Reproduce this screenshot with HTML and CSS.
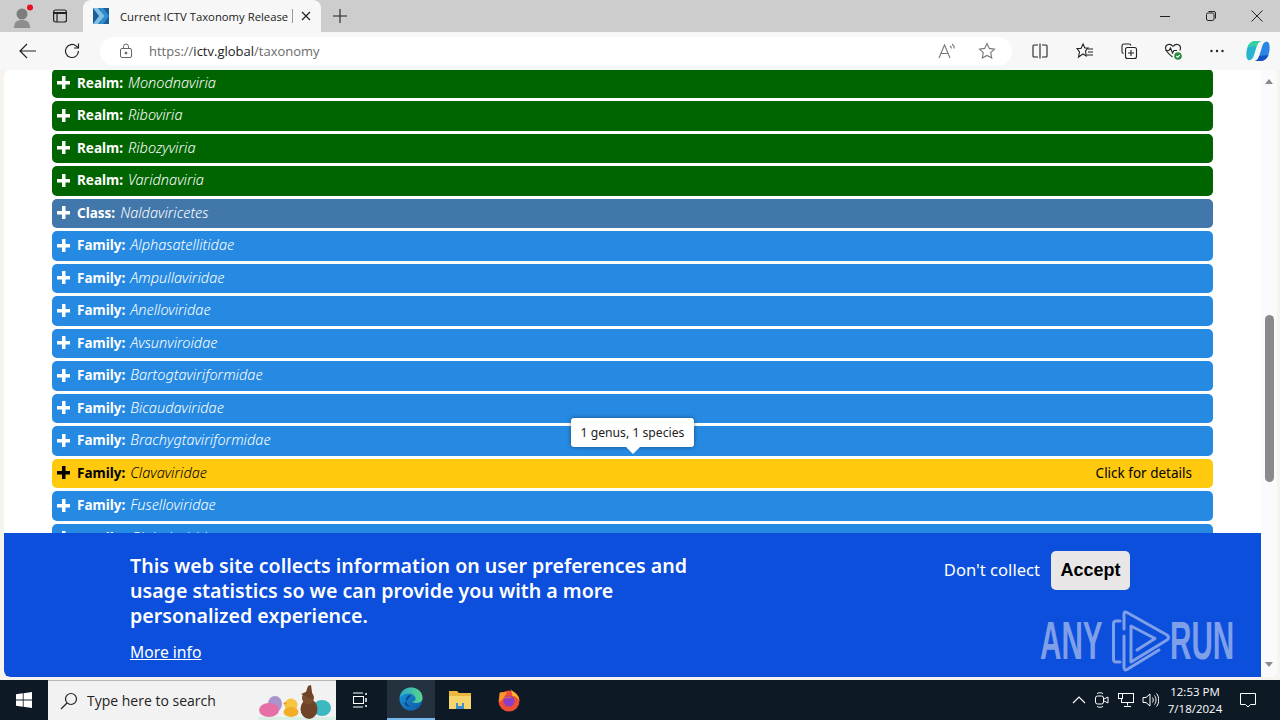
FILE: index.html
```html
<!DOCTYPE html>
<html lang="en">
<head>
    <meta charset="UTF-8">
    <title>Current ICTV Taxonomy Release</title>
    <link rel="stylesheet" href="styles.css">
</head>
<body>
    <div class="tabstrip">
        <div class="profile">
            <svg width="24" height="24" viewBox="0 0 24 24"><circle cx="11" cy="10" r="5.5" fill="#7d7d7d"/><path d="M3 24c0-6 3-8 8-8s8 2 8 8z" fill="#8e8e8e"/><circle cx="19" cy="3.5" r="3" fill="#e81123"/></svg>
        </div>
        <div class="tab-actions">
            <svg width="16" height="16" viewBox="0 0 16 16" fill="none" stroke="#222" stroke-width="1.2"><rect x="1.600" y="2" width="12.800" height="12" rx="2"/><path d="M1.600 5h12.800" stroke-width="2"/><path d="M5 5v9"/></svg>
        </div>
        <div class="tab">
            <svg class="favicon" width="16" height="16" viewBox="0 0 16 16"><rect width="16" height="16" fill="#1c5f96"/><path d="M0 0h5l7 8-7 8H0l6-8z" fill="#7fc0e8"/><path d="M6 0h4l6 8-6 8H6l6-8z" fill="#2f8fd0"/></svg>
            <span class="tab-title">Current ICTV Taxonomy Release</span>
            <span class="tab-sep"></span>
            <svg class="tab-close" width="10" height="10" viewBox="0 0 10 10" stroke="#222" stroke-width="1.2"><path d="M1 1l8 8M9 1l-8 8"/></svg>
        </div>
        <svg class="new-tab" width="14" height="14" viewBox="0 0 14 14" stroke="#222" stroke-width="1.1"><path d="M7 0v14M0 7h14"/></svg>
        <div class="window-buttons">
            <svg width="12" height="12" viewBox="0 0 12 12" stroke="#222"><path d="M1 6.500h10"/></svg>
            <svg width="12" height="12" viewBox="0 0 12 12" fill="none" stroke="#222"><rect x="1.500" y="3" width="7.500" height="7.500" rx="1.500"/><path d="M3.500 1.500h5.500a1.500 1.500 0 0 1 1.500 1.500v5.500"/></svg>
            <svg width="12" height="12" viewBox="0 0 12 12" stroke="#222"><path d="M.5.5l11 11M11.500.5l-11 11"/></svg>
        </div>
    </div>

    <div class="toolbar">
        <svg class="nav-icon" width="18" height="16" viewBox="0 0 18 16" fill="none" stroke="#222" stroke-width="1.2"><path d="M1 8h16M8 1L1 8l7 7"/></svg>
        <svg class="nav-icon" width="18" height="18" viewBox="0 0 18 18" fill="none" stroke="#222" stroke-width="1.2"><path d="M15.500 9a6.500 6.500 0 1 1-2.200-4.900L15.500 6"/><path d="M15.500 1.500V6H11"/></svg>
        <div class="address">
            <svg class="lock" width="14" height="16" viewBox="0 0 14 16" fill="none" stroke="#666" stroke-width="1"><rect x="1.500" y="5.500" width="11" height="9" rx="1.500"/><path d="M4.500 5.500V3.500a2.500 2.500 0 0 1 5 0v2"/><circle cx="7" cy="10" r="1" fill="#666"/></svg>
            <span class="url">https://<b>ictv.global</b>/taxonomy</span>
            <svg class="addr-icon" width="18" height="18" viewBox="0 0 18 18" fill="none" stroke="#777" stroke-width="1.1"><path d="M1 16L6.500 3 12 16M3 11.500h7"/><path d="M12 4c1 .7 1.400 1.500 1.400 2.500M14 2c1.600 1.200 2.300 2.800 2.300 4.500"/></svg>
            <svg class="addr-icon" width="18" height="18" viewBox="0 0 18 18" fill="none" stroke="#777" stroke-width="1.1"><path d="M9 1.500l2.300 4.900 5.200.7-3.800 3.600 1 5.300L9 13.400 4.300 16l1-5.300L1.500 7.100l5.200-.7z"/></svg>
        </div>
        <div class="tools">
            <svg width="16" height="16" viewBox="0 0 16 16" fill="none" stroke="#222" stroke-width="1.1"><path d="M6 2H2a1 1 0 0 0-1 1v10a1 1 0 0 0 1 1h4M10 2h4a1 1 0 0 1 1 1v10a1 1 0 0 1-1 1h-4M8 .5v15"/></svg>
            <svg width="18" height="18" viewBox="0 0 18 18" fill="none" stroke="#222" stroke-width="1.1"><path d="M7 2l1.800 4H12L9.500 9l.8 5L7 12l-4.500 3 1-5L1 6.500h4z"/><path d="M12 7h5M12 10h5M11 13h6"/></svg>
            <svg width="18" height="18" viewBox="0 0 18 18" fill="none" stroke="#222" stroke-width="1.1"><rect x="5.500" y="5.500" width="11" height="11" rx="2"/><path d="M11 8v6M8 11h6"/><path d="M3.500 11.500A2 2 0 0 1 2 9.500V4a2 2 0 0 1 2-2h5a2 2 0 0 1 2 1.500"/></svg>
            <svg width="18" height="18" viewBox="0 0 18 18" fill="none" stroke="#222" stroke-width="1.1"><path d="M9 4.500C6.500 1 1.500 2 1.500 6c0 3.500 4 6.500 7 9"/><path d="M9 4.500c2.500-3.500 7.500-2.500 7.500 1.500 0 1-.3 1.800-.8 2.500"/><path d="M1.500 8.500h3.500l1.500-2.500 2 5 1.500-2.500h3"/><circle cx="14" cy="14" r="3.800" fill="#2c8a3f" stroke="none"/><path d="M12.300 14l1.300 1.300 2.200-2.500" stroke="#fff"/></svg>
            <svg width="16" height="16" viewBox="0 0 16 16" fill="#222"><circle cx="2.500" cy="8" r="1.200"/><circle cx="8" cy="8" r="1.200"/><circle cx="13.500" cy="8" r="1.200"/></svg>
            <svg class="copilot" width="24" height="24" viewBox="0 0 24 24">
                <path d="M9 2h6c-2.500 .5-3.500 3-4.500 6l-2.500 8c-.8 3-2.500 6-6 5C0 19 0 14 1 10 2 6 5 2 9 2z" fill="#27b5cf"/>
                <path d="M1.500 8C3 4.500 5.500 2 9 2h6c-2.500 .5-3.500 3-4 5z" fill="#35cfa0"/>
                <path d="M15 22H9c2.500-.5 3.500-3 4.500-6l2.500-8c.8-3 2.500-6 6-5 2 2 2 7 1 11-1 4-4 8-8 8z" fill="#2a86e4"/>
                <path d="M22.500 16c-1.500 3.500-4 6-7.500 6H9c2.500-.5 3.500-3 4-5z" fill="#1553c4"/>
            </svg>
        </div>
    </div>

    <div class="viewport">
        <div class="page">
            <div class="content">
                <div class="taxa">
                    <div class="row realm"><span class="plus"></span><b>Realm:</b> <i>Monodnaviria</i></div>
                    <div class="row realm"><span class="plus"></span><b>Realm:</b> <i>Riboviria</i></div>
                    <div class="row realm"><span class="plus"></span><b>Realm:</b> <i>Ribozyviria</i></div>
                    <div class="row realm"><span class="plus"></span><b>Realm:</b> <i>Varidnaviria</i></div>
                    <div class="row class"><span class="plus"></span><b>Class:</b> <i>Naldaviricetes</i></div>
                    <div class="row family"><span class="plus"></span><b>Family:</b> <i>Alphasatellitidae</i></div>
                    <div class="row family"><span class="plus"></span><b>Family:</b> <i>Ampullaviridae</i></div>
                    <div class="row family"><span class="plus"></span><b>Family:</b> <i>Anelloviridae</i></div>
                    <div class="row family"><span class="plus"></span><b>Family:</b> <i>Avsunviroidae</i></div>
                    <div class="row family"><span class="plus"></span><b>Family:</b> <i>Bartogtaviriformidae</i></div>
                    <div class="row family"><span class="plus"></span><b>Family:</b> <i>Bicaudaviridae</i></div>
                    <div class="row family"><span class="plus"></span><b>Family:</b> <i>Brachygtaviriformidae</i></div>
                    <div class="row hover"><span class="plus"></span><b>Family:</b> <i>Clavaviridae</i><span class="details">Click for details</span></div>
                    <div class="row family"><span class="plus"></span><b>Family:</b> <i>Fuselloviridae</i></div>
                    <div class="row family"><span class="plus"></span><b>Family:</b> <i>Globuloviridae</i></div>
                </div>
                <div class="tooltip">1 genus, 1 species</div>
                <div class="cookie">
                    <div class="cookie-text">
                        <p>This web site collects information on user preferences and usage statistics so we can provide you with a more personalized experience.</p>
                        <a class="more-info">More info</a>
                    </div>
                    <div class="cookie-actions">
                        <span class="decline">Don't collect</span>
                        <span class="accept">Accept</span>
                    </div>
                </div>
            </div>
            <div class="scrollbar">
                <span class="arrow-up"></span>
                <div class="track"><span class="thumb"></span></div>
                <span class="arrow-down"></span>
            </div>
            <div class="watermark">
                <span class="wm-word">ANY</span>
                <svg width="62" height="64" viewBox="0 0 62 64" fill="none" stroke="#7f9fe8" stroke-width="3" stroke-linecap="round" stroke-linejoin="round">
                    <path d="M10 12H6Q3.500 12 3.500 15V50Q3.500 53 6 53H10"/>
                    <path d="M14 20V5Q14 2 17 3.500L57 26Q60 28.500 57 31L21 53V17L45 29.500 27 41"/>
                    <path d="M14 27V58Q14 62 17 60.500L49 41"/>
                </svg>
                <span class="wm-word wm-run">RUN</span>
            </div>
        </div>
    </div>

    <div class="taskbar">
        <div class="start">
            <svg width="16" height="16" viewBox="0 0 16 16" fill="#fff"><path d="M0 2.300l6.800-1v6.300H0zM7.600 1.200L16 0v7.600H7.600zM0 8.400h6.800v6.300l-6.800-1zM7.600 8.400H16V16l-8.400-1.200z"/></svg>
        </div>
        <div class="search">
            <svg width="18" height="18" viewBox="0 0 18 18" fill="none" stroke="#222" stroke-width="1.2"><circle cx="11" cy="7" r="5.500"/><path d="M7 11l-6 6"/></svg>
            <span>Type here to search</span>
            <svg class="easter" width="78" height="40" viewBox="0 0 78 40">
                <path d="M0 37h78v3H0z" fill="#d9efe3"/>
                <ellipse cx="64" cy="28" rx="9" ry="8" fill="#3bb8c0"/>
                <ellipse cx="17" cy="24" rx="7" ry="8" fill="#a994cc"/>
                <ellipse cx="11" cy="30" rx="10" ry="7" fill="#e66fa6"/>
                <circle cx="33" cy="25" r="6.500" fill="#f7c640"/>
                <path d="M25 23l4-1-2 3z" fill="#ee8a2a"/>
                <ellipse cx="33" cy="32" rx="7.500" ry="5" fill="#f2ae27"/>
                <ellipse cx="51" cy="29" rx="8.500" ry="10" fill="#6f4328"/>
                <ellipse cx="50" cy="18" rx="6" ry="6.500" fill="#7d4d2f"/>
                <path d="M43 14l5-2 2-6 3-1 2 14-6-2z" fill="#6f4328"/>
            </svg>
        </div>
        <div class="task task-view">
            <svg width="16" height="16" viewBox="0 0 16 16" fill="none" stroke="#fff"><path d="M1 1h10M1 15h10"/><rect x="1.500" y="4.500" width="10" height="7"/><path d="M14 1v2M14 6v4M14 13v2" stroke-width="1.500"/></svg>
        </div>
        <div class="task task-active">
            <svg width="24" height="24" viewBox="0 0 24 24">
                <defs>
                    <linearGradient id="edge-blue" x1="0" y1="0" x2="1" y2="1"><stop offset="0" stop-color="#1a9ad8"/><stop offset="1" stop-color="#0d56a8"/></linearGradient>
                    <linearGradient id="edge-green" x1="0" y1="0" x2="1" y2="0"><stop offset="0" stop-color="#2aa8c8"/><stop offset="1" stop-color="#5ad58a"/></linearGradient>
                </defs>
                <circle cx="12" cy="12" r="11.500" fill="url(#edge-blue)"/>
                <path d="M.6 11C1.500 4.500 6.500.5 12 .5c6.500 0 11.500 4.500 11.500 10.500 0 3.500-3 5-6 5-2 0-3.500-.5-4.500-1.500 2.500 0 4-1.500 3.500-3.500C15.500 8 12.500 6 9 6.500 5 7 1.500 9 .6 11z" fill="url(#edge-green)"/>
                <path d="M12 8c-3 0-5 2.500-5 5.500 0 2.500 1.500 5 4.500 6-3 .3-5-1-6-3" fill="#0b3f86"/>
            </svg>
        </div>
        <div class="task">
            <svg width="22" height="20" viewBox="0 0 22 20"><path d="M0 1h8l2 2h12v16H0z" fill="#e9b83c"/><path d="M0 6h22v13H0z" fill="#f6d56b"/><path d="M7 13h8v6H7z" fill="#3d8fd1"/><path d="M9 13h4v3H9z" fill="#f6d56b"/></svg>
        </div>
        <div class="task">
            <svg width="24" height="24" viewBox="0 0 24 24">
                <circle cx="12" cy="13" r="10.500" fill="#ee4f34"/>
                <path d="M14 1c1 3 8 5 8.500 12-1.500-3-4-5-7-5z" fill="#fdb72b"/>
                <path d="M2.500 5c1.500-1 3-1.500 4-.5 1-.5 2.500-.5 3.500 0L5 12l-3 2z" fill="#f9982b"/>
                <circle cx="12" cy="13" r="5.500" fill="#8a3fc8"/>
                <path d="M7 11c2-3 6-3 8-1-3-.5-5 0-8 1z" fill="#f46a2d"/>
            </svg>
        </div>
        <div class="tray">
            <svg width="14" height="8" viewBox="0 0 14 8" fill="none" stroke="#fff" stroke-width="1.100"><path d="M1 7l6-6 6 6"/></svg>
            <svg width="16" height="18" viewBox="0 0 16 18" fill="none" stroke="#fff"><rect x="1.500" y="5" width="8" height="8" rx="2"/><path d="M10 8l4-2v6l-4-2M3 2.500c2-1 4-1 6 0M3 15.500c2 1 4 1 6 0"/></svg>
            <svg width="16" height="16" viewBox="0 0 16 16" fill="none" stroke="#fff"><rect x="3.500" y="1.500" width="12" height="9"/><rect x=".5" y="1.500" width="4" height="5" fill="#0d1a26"/><path d="M9.500 10.500v3M6 14.500h7"/></svg>
            <svg width="17" height="16" viewBox="0 0 17 16" fill="none" stroke="#fff"><path d="M1 5.500h3L8 2v12l-4-3.500H1z"/><path d="M10.500 5.500c1 1.500 1 3.500 0 5M12.500 3.500c2 2.500 2 6.500 0 9M14.500 1.500c3 3.500 3 9.500 0 13"/></svg>
            <div class="clock"><span>12:53 PM</span><span>7/18/2024</span></div>
            <svg class="notify" width="16" height="15" viewBox="0 0 16 15" fill="none" stroke="#fff"><path d="M.5.5h15v11h-5L8 14l-2.500-2.500h-5z"/></svg>
        </div>
    </div>
</body>
</html>
```
FILE: styles.css
```css
* {
    box-sizing: border-box;
}
html, body {
    margin: 0;
    height: 100%;
}
body {
    width: 1280px;
    height: 720px;
    overflow: hidden;
    display: flex;
    flex-direction: column;
    font-family: "Open Sans", "Noto Sans", sans-serif;
    background: #f7f3ef;
}
svg {
    display: block;
    flex: none;
}

/* browser chrome */
.tabstrip {
    height: 32px;
    display: flex;
    align-items: center;
    background: #cdcdcd;
}
.profile {
    width: 41px;
    padding-left: 11px;
}
.tab-actions {
    width: 42px;
    padding-left: 11px;
}
.tab {
    width: 238px;
    height: 32px;
    padding: 0 10px;
    display: flex;
    align-items: center;
    background: #f7f7f7;
    border-radius: 8px 8px 0 0;
}
.tab-title {
    margin-left: 11px;
    width: 172px;
    font-size: 11.3px;
    white-space: nowrap;
    color: #222;
}
.tab-sep {
    width: 1px;
    height: 14px;
    background: #999;
}
.tab-close {
    margin-left: auto;
}
.new-tab {
    margin-left: 12px;
}
.window-buttons {
    margin-left: auto;
    display: flex;
    gap: 34px;
    padding-right: 17px;
}
.toolbar {
    height: 38px;
    display: flex;
    align-items: center;
    background: #f7f7f7;
    padding-left: 19px;
}
.nav-icon + .nav-icon {
    margin-left: 26px;
}
.address {
    width: 912px;
    height: 29px;
    margin-left: 19px;
    padding: 0 16px 0 19px;
    display: flex;
    align-items: center;
    background: #fff;
    border-radius: 15px;
}
.url {
    margin-left: 16px;
    font-size: 13px;
    color: #6b6b6b;
}
.url b {
    font-weight: 400;
    color: #222;
}
.addr-icon {
    margin-left: 22px;
}
.url + .addr-icon {
    margin-left: auto;
}
.tools {
    display: flex;
    align-items: center;
    gap: 27px;
    margin-left: 20px;
}
.tools svg:nth-child(2) {
    margin-left: 1px;
}
.tools svg:nth-child(3) {
    margin-left: -1px;
}
.tools svg:nth-child(4) {
    margin-left: -1px;
}
.tools .copilot {
    margin-left: -6px;
}

/* page area */
.viewport {
    flex: 1;
    min-height: 0;
    padding: 0 3px 3px 4px;
}
.page {
    position: relative;
    height: 100%;
    display: flex;
    background: #fff;
    border-radius: 6px;
    overflow: hidden;
}
.content {
    position: relative;
    flex: 1;
    min-width: 0;
    padding: 0 48px;
    font-family: "Noto Sans", "Open Sans", sans-serif;
}
.taxa {
    margin-top: -1.5px;
    display: flex;
    flex-direction: column;
    gap: 3px;
}
.row {
    height: 29.5px;
    flex: none;
    display: flex;
    align-items: baseline;
    gap: 5px;
    padding-left: 5px;
    border-radius: 5px;
    font-size: 13.5px;
    line-height: 26px;
    color: #fff;
}
.row b {
    font-weight: 700;
}
.row i {
    font-size: 14.5px;
    font-weight: 300;
}
.plus {
    align-self: center;
    width: 13px;
    height: 13px;
    margin: 0 2px 1px 0;
    background:
        linear-gradient(currentColor, currentColor) center / 13px 3.5px no-repeat,
        linear-gradient(currentColor, currentColor) center / 3.5px 13px no-repeat;
}
.realm {
    background: #006400;
}
.class {
    background: #4177ab;
}
.family {
    background: #268ae2;
}
.hover {
    background: #ffc90e;
    color: #000;
}
.details {
    margin-left: auto;
    padding-right: 21px;
}

/* over the list */
.tooltip {
    position: absolute;
    left: 567px;
    top: 348px;
    width: 123px;
    height: 29px;
    display: flex;
    align-items: center;
    justify-content: center;
    background: #fff;
    border-radius: 3px;
    box-shadow: 0 0 4px rgba(0, 0, 0, 0.45);
    font-size: 12.2px;
    color: #222;
}
.tooltip::after {
    content: "";
    position: absolute;
    left: 55px;
    bottom: -7px;
    border-left: 7px solid transparent;
    border-right: 7px solid transparent;
    border-top: 7px solid #fff;
}
.cookie {
    position: absolute;
    left: 0;
    right: 0;
    top: 463px;
    height: 144px;
    padding: 18px 131px 0 126px;
    display: flex;
    justify-content: space-between;
    background: #0b4fdc;
    border-radius: 0 0 0 6px;
    color: #fff;
}
.cookie-text {
    width: 570px;
    padding-top: 2px;
}
.cookie-text p {
    margin: 0 0 13px;
    font-size: 19.6px;
    font-weight: 600;
    line-height: 25px;
}
.more-info {
    font-size: 15.7px;
    text-decoration: underline;
}
.cookie-actions {
    display: flex;
    align-items: center;
    gap: 11px;
    height: 39px;
}
.decline {
    padding-bottom: 2px;
    font-size: 16.6px;
}
.accept {
    width: 79px;
    height: 39px;
    display: flex;
    align-items: center;
    justify-content: center;
    background: #e8e6e6;
    border-radius: 5px;
    font-family: "Liberation Sans", sans-serif;
    font-size: 18px;
    font-weight: 700;
    color: #000;
}
.scrollbar {
    width: 16px;
    display: flex;
    flex-direction: column;
    align-items: center;
    background: #fbfbfb;
}
.arrow-up {
    margin-top: 9px;
    border-left: 4px solid transparent;
    border-right: 4px solid transparent;
    border-bottom: 5px solid #8a8a8a;
}
.arrow-down {
    margin-bottom: 10px;
    border-left: 4px solid transparent;
    border-right: 4px solid transparent;
    border-top: 5px solid #8a8a8a;
}
.track {
    flex: 1;
    width: 100%;
    padding-top: 231px;
    display: flex;
    justify-content: center;
}
.thumb {
    width: 9px;
    height: 167px;
    background: #8a8a8a;
    border-radius: 5px;
}
.watermark {
    position: absolute;
    left: 1036px;
    top: 539px;
    height: 64px;
    display: flex;
    align-items: center;
    gap: 4px;
    font-family: "Liberation Sans", sans-serif;
    font-weight: 700;
    color: #7f9fe8;
}
.wm-word {
    width: 66px;
    font-size: 53px;
    line-height: 64px;
    white-space: nowrap;
    transform: scaleX(0.56);
    transform-origin: left center;
}
.wm-run {
    margin-left: -6px;
}

/* windows taskbar */
.taskbar {
    height: 40px;
    display: flex;
    align-items: center;
    background: #0d1a26;
}
.start {
    width: 48px;
    padding-left: 16px;
}
.search {
    position: relative;
    width: 288px;
    height: 40px;
    padding-left: 12px;
    display: flex;
    align-items: center;
    gap: 9px;
    background: #f2f2f2;
    border-top: 1px solid #b8b8b8;
    font-size: 14px;
    color: #222;
}
.easter {
    position: absolute;
    right: 0;
    bottom: 0;
}
.task {
    width: 49px;
    height: 40px;
    display: flex;
    align-items: center;
    justify-content: center;
}
.task-view {
    width: 48px;
    margin-right: 3px;
}
.task-active {
    width: 48px;
    background: #24323f;
    border-bottom: 2px solid #76b9ed;
}
.tray {
    margin-left: auto;
    display: flex;
    align-items: center;
    gap: 8px;
    color: #fff;
}
.clock {
    width: 62px;
    margin-left: -3px;
    display: flex;
    flex-direction: column;
    align-items: center;
    gap: 2px;
    font-size: 11.5px;
    line-height: 15px;
    white-space: nowrap;
}
.notify {
    margin: 0 24px 0 6px;
}
```
